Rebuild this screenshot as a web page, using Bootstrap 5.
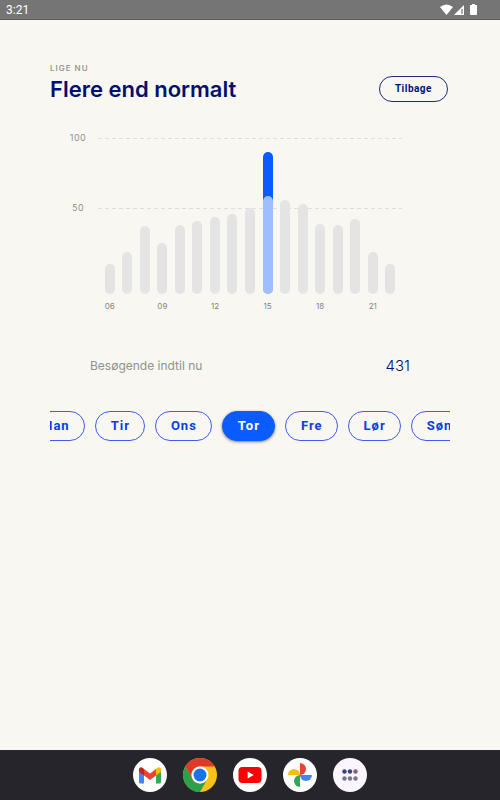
<!DOCTYPE html>
<html lang="da">
<head>
<meta charset="utf-8">
<meta name="viewport" content="width=device-width, initial-scale=1">
<title>Flere end normalt</title>
<link href="https://cdn.jsdelivr.net/npm/bootstrap@5.3.0/dist/css/bootstrap.min.css" rel="stylesheet">
<style>
  body { background: #f8f7f2; font-family: Inter, "Open Sans", sans-serif; }
  .status-bar { background: #757575; height: 20px; font: 12px/20px Roboto, sans-serif; border-bottom: 1px solid #5c5c5c; padding: 0 22px 0 6px; }
  .screen { padding: 40px 50px 0; }
  .eyebrow { font-size: 8px; line-height: 16px; letter-spacing: 1px; color: #999994; font-weight: 600; }
  .headline { font-size: 22px; line-height: 26px; font-weight: 600; color: #001071; }
  .back-btn { font: 700 10px/24px Roboto, sans-serif; letter-spacing: 0.5px; color: #001071; border: 1px solid #1c2c83; padding: 0 15px; margin: 16px 2px 0 0; }
  .back-btn:hover { background: #001071; color: #fff; }
  .chart { padding: 0 48px 0 14px; margin-top: 29px; }
  .scale { width: 34px; font-size: 9px; line-height: 14px; color: #92928f; letter-spacing: 0.5px; }
  .scale div { width: 28px; height: 70px; }
  .plot { display: grid; height: 156px; margin-top: 7px; }
  .plot > * { grid-area: 1 / 1; }
  .rules div { height: 70px; background: repeating-linear-gradient(90deg, #dededb 0 4px, transparent 4px 7px) top / 100% 1px no-repeat; }
  .slots { padding: 0 3px; }
  .slot { flex: 1 1 0; min-width: 0; }
  .bar { width: 10px; background: #e4e4e4; }
  .bar-live { background: linear-gradient(#0a5cff 50%, #9ebeff 50%); }
  .bar-usual { width: 10px; background: #9ebeff; }
  .hours { font-size: 8px; line-height: 12px; color: #858582; margin-top: 6px; }
  .visitors { padding: 0 40px; margin-top: 42px; font-size: 12px; line-height: 24px; color: #92928f; }
  .visitors dd { font-size: 15px; color: #001071; font-weight: 300; }
  .days { gap: 10px; margin-top: 31px; padding: 2px 0 5px; overflow-x: auto; scrollbar-width: none; }
  .days::-webkit-scrollbar { display: none; }
  .day { font: 700 13px/28px Roboto, sans-serif; letter-spacing: 1px; padding: 0 14px 0 15px; color: #083fe0; border: 1px solid #3c5df0; }
  .day:hover { background: #e3eaff; color: #083fe0; }
  .day.active { background: #0a5cff; border-color: #0a5cff; color: #fff; box-shadow: 0 1px 3px #00000080; }
  .dock { background: #26252b; height: 50px; gap: 16px; }
  .dock svg { width: 34px; height: 34px; display: block; }
</style>
</head>
<body class="min-vh-100 d-flex flex-column">
<header class="status-bar d-flex justify-content-between align-items-center text-white">
  <time>3:21</time>
  <svg width="38" height="12" viewBox="0 0 38 12" fill="#fff" aria-label="Wi-Fi, signal, batteri">
    <path d="M0 3Q6.500-2 13 3L6.500 11Z"/>
    <path d="M14 11L24 1V11Z"/><path d="M22 5V10" stroke="#757575" stroke-width="1.200"/>
    <path d="M32 0h3v1h1.500q.500 0 .500.600V10q0 1-1 1h-5q-1 0-1-1V1.600q0-.600.500-.600H32Z"/>
  </svg>
</header>

<main class="screen flex-grow-1">
  <div class="d-flex justify-content-between align-items-start">
    <div>
      <div class="eyebrow">LIGE NU</div>
      <h1 class="headline mb-0">Flere end normalt</h1>
    </div>
    <button type="button" class="btn rounded-pill back-btn">Tilbage</button>
  </div>

  <section class="chart d-flex" aria-label="Besøgende pr. time">
    <div class="scale"><div class="text-center">100</div><div class="text-center">50</div></div>
    <div class="flex-grow-1">
      <div class="plot">
        <div class="rules"><div></div><div></div></div>
        <div class="slots d-flex align-items-end" id="bars"></div>
      </div>
      <div class="slots hours d-flex" id="hours"></div>
    </div>
  </section>

  <dl class="visitors d-flex justify-content-between mb-0">
    <dt class="fw-normal">Besøgende indtil nu</dt>
    <dd class="mb-0">431</dd>
  </dl>

  <nav class="days d-flex" id="days" aria-label="Ugedage">
    <button type="button" class="btn rounded-pill flex-shrink-0 day">Man</button>
    <button type="button" class="btn rounded-pill flex-shrink-0 day">Tir</button>
    <button type="button" class="btn rounded-pill flex-shrink-0 day">Ons</button>
    <button type="button" class="btn rounded-pill flex-shrink-0 day active" aria-pressed="true">Tor</button>
    <button type="button" class="btn rounded-pill flex-shrink-0 day">Fre</button>
    <button type="button" class="btn rounded-pill flex-shrink-0 day">Lør</button>
    <button type="button" class="btn rounded-pill flex-shrink-0 day">Søn</button>
  </nav>
</main>

<footer class="dock d-flex justify-content-center align-items-center">
  <a href="#gmail" aria-label="Gmail"><svg viewBox="0 0 34 34">
    <circle cx="17" cy="17" r="17" fill="#fff"/>
    <path d="M6 12v12q0 1.500 1.500 1.500H11V15Z" fill="#4285f4"/>
    <path d="M28 12v12q0 1.500-1.500 1.500H23V15Z" fill="#34a853"/>
    <path d="M11 11v6.500l6 4.500 6-4.500V11L17 15.500Z" fill="#ea4335"/>
    <path d="M6 11.500v2.300l5 3.700V11L9.800 10C8 8.700 6 9.500 6 11.500Z" fill="#c5221f"/>
    <path d="M28 11.500v2.300l-5 3.700V11l1.200-1C26 8.700 28 9.500 28 11.500Z" fill="#fbbc04"/>
  </svg></a>
  <a href="#chrome" aria-label="Chrome"><svg viewBox="0 0 34 34">
    <circle cx="17" cy="17" r="17" fill="#fbc116"/>
    <path d="M2.300 8.500A17 17 0 0 1 31.700 8.500H17A8.500 8.500 0 0 0 9.600 21.200Z" fill="#dd3a2b"/>
    <path d="M2.300 8.500A17 17 0 0 0 17 34L24.400 21.200A8.500 8.500 0 0 1 9.600 21.200Z" fill="#2da04c"/>
    <circle cx="17" cy="17" r="8.500" fill="#fff"/><circle cx="17" cy="17" r="6.500" fill="#1a73e8"/>
  </svg></a>
  <a href="#youtube" aria-label="YouTube"><svg viewBox="0 0 34 34">
    <circle cx="17" cy="17" r="17" fill="#fff"/>
    <rect x="5.500" y="9" width="23" height="16" rx="4" fill="#f00"/>
    <path d="M14.700 13.600v6.800l6-3.400Z" fill="#fff"/>
  </svg></a>
  <a href="#fotos" aria-label="Fotos"><svg viewBox="0 0 34 34">
    <circle cx="17" cy="17" r="17" fill="#fff"/>
    <path d="M17 5a6 6 0 0 1 0 12Z" fill="#ea4335"/>
    <path d="M29 17a6 6 0 0 1-12 0Z" fill="#4285f4"/>
    <path d="M17 29a6 6 0 0 1 0-12Z" fill="#34a853"/>
    <path d="M5 17a6 6 0 0 1 12 0Z" fill="#fbbc04"/>
  </svg></a>
  <a href="#apps" aria-label="Alle apps"><svg viewBox="0 0 34 34">
    <circle cx="17" cy="17" r="17" fill="#faf5ff"/>
    <g fill="#3a3f7d"><circle cx="11.500" cy="13.500" r="2.200"/><circle cx="17" cy="13.500" r="2.200"/></g>
    <circle cx="22.500" cy="13.500" r="2.200" fill="#88597b"/>
    <g fill="#777684"><circle cx="11.500" cy="20.500" r="2.200"/><circle cx="17" cy="20.500" r="2.200"/><circle cx="22.500" cy="20.500" r="2.200"/></g>
  </svg></a>
</footer>

<script src="https://cdn.jsdelivr.net/npm/bootstrap@5.3.0/dist/js/bootstrap.bundle.min.js"></script>
<script>
  // Bar heights for 06:00 to 22:00, on a plot that is 156 units high
  const usual = [30, 42, 68, 51, 69, 73, 77, 80, 86, 98, 94, 90, 70, 69, 75, 42, 30];
  const now = { hour: 15, level: 142 };
  const pct = v => (v / 156 * 100) + '%';
  let bars = '', hours = '';
  usual.forEach((v, i) => {
    const hour = i + 6;
    const bar = hour === now.hour
      ? `<div class="bar bar-live rounded-pill d-flex align-items-end" style="height:${pct(now.level)}"><div class="bar-usual rounded-pill" style="height:${v / now.level * 100}%"></div></div>`
      : `<div class="bar rounded-pill" style="height:${pct(v)}"></div>`;
    bars += `<div class="slot h-100 d-flex justify-content-center align-items-end">${bar}</div>`;
    hours += `<div class="slot d-flex justify-content-center">${hour % 3 ? '' : String(hour).padStart(2, '0')}</div>`;
  });
  document.getElementById('bars').innerHTML = bars;
  document.getElementById('hours').innerHTML = hours;
  document.getElementById('days').scrollLeft = 25;
</script>
</body>
</html>
